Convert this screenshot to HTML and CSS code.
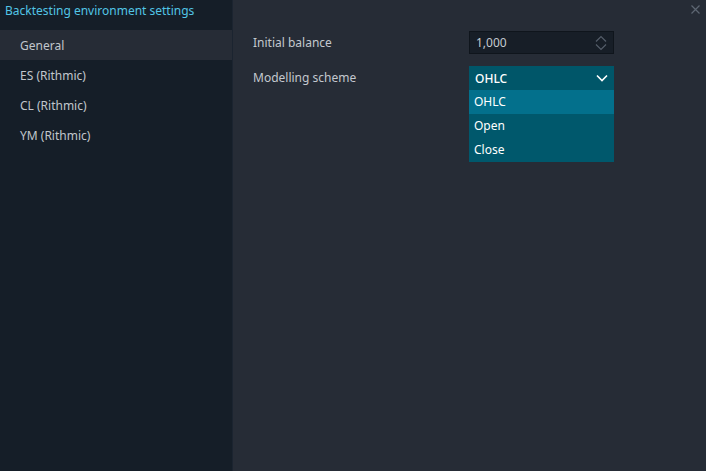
FILE: index.html
```html
<!DOCTYPE html>
<html>
<head>
<meta charset="utf-8">
<link rel="stylesheet" href="styles.css">
</head>
<body>
<div class="window">
  <aside class="sidebar">
    <div class="title">Backtesting environment settings</div>
    <nav class="nav">
      <div class="nav-item active">General</div>
      <div class="nav-item">ES (Rithmic)</div>
      <div class="nav-item">CL (Rithmic)</div>
      <div class="nav-item">YM (Rithmic)</div>
    </nav>
  </aside>
  <main class="content">
    <button class="close" aria-label="Close">
      <svg width="9" height="9" viewBox="0 0 9 9"><path d="M0.5 0.5L8.5 8.5M8.5 0.5L0.5 8.5" stroke="#5d6672" stroke-width="1.2"/></svg>
    </button>
    <div class="form">
      <div class="row">
        <label class="label">Initial balance</label>
        <div class="spin">
          <span class="spin-value">1,000</span>
          <span class="spin-arrows">
            <svg width="12" height="16" viewBox="0 0 12 16"><path d="M1 6.5L6 1.5L11 6.5M1 9.5L6 14.5L11 9.5" fill="none" stroke="#545d69" stroke-width="1.2"/></svg>
          </span>
        </div>
      </div>
      <div class="row">
        <label class="label">Modelling scheme</label>
        <div class="select">
          <div class="select-head">
            <span>OHLC</span>
            <svg width="12" height="8" viewBox="0 0 12 8"><path d="M1 1.5L6 6.5L11 1.5" fill="none" stroke="#ffffff" stroke-width="1.6"/></svg>
          </div>
          <div class="select-list">
            <div class="option selected">OHLC</div>
            <div class="option">Open</div>
            <div class="option">Close</div>
          </div>
        </div>
      </div>
    </div>
  </main>
</div>
</body>
</html>
```
FILE: styles.css
```css
* { box-sizing: border-box; }
html, body { margin: 0; height: 100%; }
body {
  font-family: "Noto Sans", "Open Sans", sans-serif;
  font-size: 12px;
  background: #262c36;
}
.window {
  display: flex;
  height: 471px;
  width: 706px;
}
.sidebar {
  width: 233px;
  flex: none;
  background: #151e28;
  border-right: 1px solid #1b2430;
}
.title {
  height: 30px;
  padding: 2px 0 0 5px;
  color: #52c5e6;
  font-size: 12px;
  line-height: 17px;
}
.nav-item {
  height: 30px;
  line-height: 31px;
  padding-left: 20px;
  color: #c1c6cc;
}
.nav-item.active {
  background: #262c36;
}
.content {
  flex: 1;
  position: relative;
  padding: 31px 0 0 20px;
}
.close {
  position: absolute;
  top: 5px;
  right: 6px;
  border: 0;
  padding: 0;
  background: none;
  display: flex;
}
.form {
  display: flex;
  flex-direction: column;
  gap: 12px;
}
.row {
  display: flex;
  align-items: flex-start;
}
.label {
  width: 216px;
  color: #c3c8ce;
  line-height: 23px;
}
.spin {
  width: 145px;
  height: 23px;
  background: #171e27;
  border: 1px solid #0f151c;
  display: flex;
  align-items: center;
  justify-content: space-between;
  padding: 0 6px 0 6px;
  color: #c5cad0;
}
.spin-arrows { display: flex; }
.select {
  width: 145px;
}
.select-head {
  height: 24px;
  background: #005669;
  color: #ffffff;
  font-weight: 500;
  display: flex;
  align-items: center;
  justify-content: space-between;
  padding: 0 6px 0 6px;
}
.select-list {
  background: #00586c;
}
.option {
  height: 24px;
  line-height: 24px;
  padding-left: 5px;
  color: #ffffff;
}
.option.selected {
  background: #03708c;
}
```
